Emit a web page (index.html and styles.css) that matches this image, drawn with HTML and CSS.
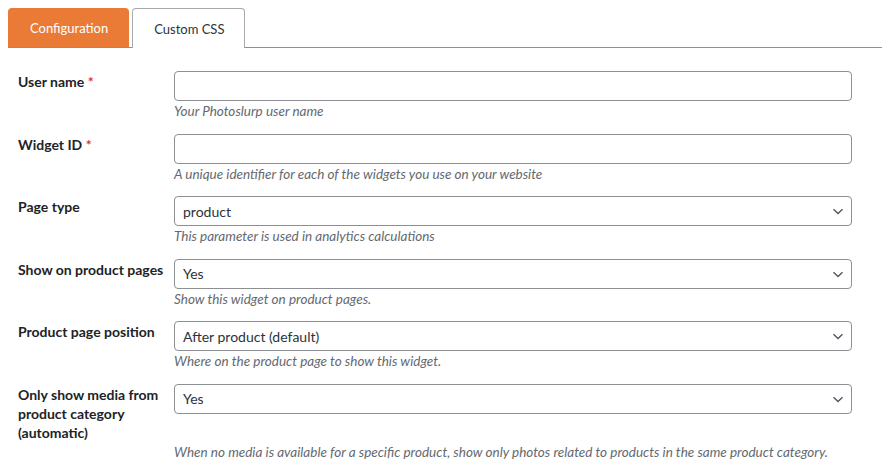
FILE: index.html
```html
<!DOCTYPE html>
<html>
<head>
<meta charset="utf-8">
<link rel="stylesheet" href="styles.css">
</head>
<body>
<div class="tabs">
  <div class="tab active">Configuration</div>
  <div class="tab">Custom CSS</div>
</div>
<div class="form">
  <div class="row">
    <label class="label">User name <span class="req">*</span></label>
    <input class="control" type="text">
    <div class="desc">Your Photoslurp user name</div>
  </div>
  <div class="row">
    <label class="label">Widget ID <span class="req">*</span></label>
    <input class="control" type="text">
    <div class="desc">A unique identifier for each of the widgets you use on your website</div>
  </div>
  <div class="row">
    <label class="label">Page type</label>
    <div class="selwrap">
      <select class="control sel"><option>product</option></select>
      <svg class="chev" width="12" height="7" viewBox="0 0 12 7"><path d="M1.5 1.2 L6 5.5 L10.5 1.2" fill="none" stroke="#50575e" stroke-width="1.4"/></svg>
    </div>
    <div class="desc">This parameter is used in analytics calculations</div>
  </div>
  <div class="row">
    <label class="label">Show on product pages</label>
    <div class="selwrap">
      <select class="control sel"><option>Yes</option></select>
      <svg class="chev" width="12" height="7" viewBox="0 0 12 7"><path d="M1.5 1.2 L6 5.5 L10.5 1.2" fill="none" stroke="#50575e" stroke-width="1.4"/></svg>
    </div>
    <div class="desc">Show this widget on product pages.</div>
  </div>
  <div class="row">
    <label class="label">Product page position</label>
    <div class="selwrap">
      <select class="control sel"><option>After product (default)</option></select>
      <svg class="chev" width="12" height="7" viewBox="0 0 12 7"><path d="M1.5 1.2 L6 5.5 L10.5 1.2" fill="none" stroke="#50575e" stroke-width="1.4"/></svg>
    </div>
    <div class="desc">Where on the product page to show this widget.</div>
  </div>
  <div class="row">
    <label class="label">Only show media from product category (automatic)</label>
    <div class="selwrap">
      <select class="control sel"><option>Yes</option></select>
      <svg class="chev" width="12" height="7" viewBox="0 0 12 7"><path d="M1.5 1.2 L6 5.5 L10.5 1.2" fill="none" stroke="#50575e" stroke-width="1.4"/></svg>
    </div>
    <div class="desc">When no media is available for a specific product, show only photos related to products in the same product category.</div>
  </div>
</div>
</body>
</html>
```
FILE: styles.css
```css
html, body {
  margin: 0;
  padding: 0;
  background: #fff;
}
body {
  padding: 8px 0 0 8px;
  font-family: Lato, "Noto Sans", sans-serif;
  color: #1d2327;
  font-size: 13px;
}
.tabs {
  display: flex;
  gap: 3px;
  border-bottom: 1px solid #8c8f94;
  height: 39px;
}
.tab {
  box-sizing: border-box;
  height: 40px;
  padding: 0 20px 0 21px;
  display: flex;
  align-items: center;
  justify-content: center;
  font-size: 13px;
  color: #2c3338;
  border: 1px solid #a7aaad;
  border-bottom: none;
  border-radius: 4px 4px 0 0;
  background: #fff;
}
.tab.active {
  background: #ea7b37;
  border-color: #ea7b37;
  color: #fff;
  height: 39px;
}
.form {
  padding: 23px 30px 0 10px;
}
.row {
  display: grid;
  grid-template-columns: 156px 1fr;
  grid-template-rows: auto auto;
  align-items: start;
  padding-bottom: 13.5px;
}
.label {
  grid-column: 1;
  grid-row: 1;
  font-weight: 700;
  font-size: 14px;
  line-height: 19px;
  padding-top: 1px;
  padding-right: 4px;
}
.req {
  color: #d63638;
}
.control {
  grid-column: 2;
  grid-row: 1;
  box-sizing: border-box;
  width: 100%;
  height: 30px;
  margin: 0;
  border: 1px solid #8c8f94;
  border-radius: 4px;
  background: #fff;
  font-family: inherit;
  font-size: 14px;
  color: #2c3338;
  padding: 0 8px;
  outline: none;
}
.selwrap {
  grid-column: 2;
  grid-row: 1;
  position: relative;
}
.sel {
  appearance: none;
  -webkit-appearance: none;
  display: block;
}
.chev {
  position: absolute;
  right: 8px;
  top: 12px;
}
.desc {
  grid-column: 2;
  grid-row: 2;
  margin-top: 1px;
  font-style: italic;
  color: #646970;
  line-height: 18px;
  font-size: 13.5px;
}
```
